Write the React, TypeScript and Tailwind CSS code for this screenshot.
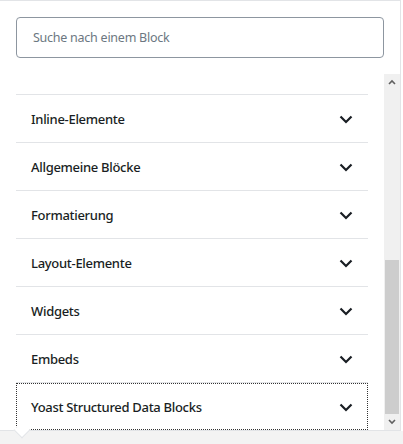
import React from 'react';

const categories = [
  'Inline-Elemente',
  'Allgemeine Blöcke',
  'Formatierung',
  'Layout-Elemente',
  'Widgets',
  'Embeds',
  'Yoast Structured Data Blocks',
];

const Chevron = () => (
  <svg width="14" height="9" viewBox="0 0 14 9" className="text-[#191e23]">
    <path d="M1.5 1.5l5.5 5.5 5.5-5.5" fill="none" stroke="currentColor" strokeWidth="2.2" />
  </svg>
);

const App = () => {
  return (
    <div
      className="relative w-[403px] h-[444px] bg-[#f3f3f3] overflow-hidden"
      style={{ fontFamily: '"Noto Sans", "Open Sans", sans-serif' }}
    >
      {/* right page strip */}
      <div className="absolute top-0 right-0 w-[2px] h-[431px] bg-white" />

      {/* Popover */}
      <div className="relative w-[401px] h-[431px] bg-white border-t border-r border-b border-[#e2e4e7] flex flex-col">
        <div className="px-4 pt-4 pb-4">
          <div className="h-[41px] border border-[#8d96a0] rounded-[4px] flex items-center px-4 pt-[2px]">
            <span className="text-[12.5px] tracking-[-0.25px] text-[#6c7781]">Suche nach einem Block</span>
          </div>
        </div>

        <div className="flex-1 flex min-h-0">
          <div className="flex-1 pl-4 pr-4 pt-[20px] overflow-hidden">
            {categories.map((c, i) => {
              const last = i === categories.length - 1;
              return (
                <div key={c} className="border-t border-[#e2e4e7]">
                  <div
                    className={`h-[47px] flex items-center justify-between pl-[15px] pr-[15px] pt-[2px] ${
                      last ? 'outline outline-1 outline-dotted outline-[#333] -outline-offset-1' : ''
                    }`}
                  >
                    <span className="text-[13px] font-medium tracking-[-0.3px] text-[#191e23]">{c}</span>
                    <Chevron />
                  </div>
                </div>
              );
            })}
          </div>

          {/* scrollbar */}
          <div className="w-[16px] bg-[#f0f0f0] flex flex-col">
            <div className="h-[16px] flex items-center justify-center">
              <svg width="8" height="6" viewBox="0 0 8 6">
                <path d="M1 5l3-3 3 3" fill="none" stroke="#606060" strokeWidth="1.6" />
              </svg>
            </div>
            <div className="flex-1 flex flex-col">
              <div className="h-[170px]" />
              <div className="flex-1 bg-[#cdcdcd] mx-[1px]" />
            </div>
            <div className="h-[16px] flex items-center justify-center">
              <svg width="8" height="6" viewBox="0 0 8 6">
                <path d="M1 1l3 3 3-3" fill="none" stroke="#606060" strokeWidth="1.6" />
              </svg>
            </div>
          </div>
        </div>
      </div>

      {/* popover arrow */}
      <div className="absolute left-[16px] top-[424px] w-[12px] h-[12px] bg-white border-r border-b border-[#e2e4e7] rotate-45" />
    </div>
  );
};

export default App;
